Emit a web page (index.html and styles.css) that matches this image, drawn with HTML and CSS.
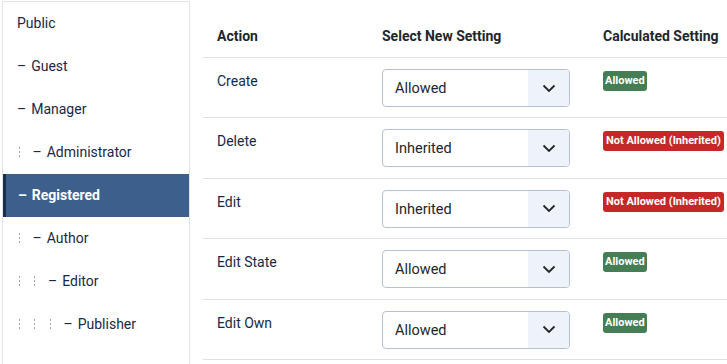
FILE: index.html
```html
<!DOCTYPE html>
<html>
<head>
  <title>Permissions</title>
  <link rel="stylesheet" href="styles.css">
</head>
<body>
  <div class="permissions">
    <ul class="groups">
      <li class="group">Public</li>
      <li class="group"><span class="dash">–</span>Guest</li>
      <li class="group"><span class="dash">–</span>Manager</li>
      <li class="group"><span class="indent"></span><span class="dash">–</span>Administrator</li>
      <li class="group active"><span class="dash">–</span>Registered</li>
      <li class="group"><span class="indent"></span><span class="dash">–</span>Author</li>
      <li class="group"><span class="indent"></span><span class="indent"></span><span class="dash">–</span>Editor</li>
      <li class="group"><span class="indent"></span><span class="indent"></span><span class="indent"></span><span class="dash">–</span>Publisher</li>
      <li class="group"></li>
    </ul>

    <table class="rules">
      <thead>
        <tr>
          <th class="col-action">Action</th>
          <th class="col-select">Select New Setting</th>
          <th class="col-calc">Calculated Setting</th>
        </tr>
      </thead>
      <tbody>
        <tr>
          <td class="action">Create</td>
          <td><div class="select"><span class="select-value">Allowed</span><span class="select-arrow"><svg width="14" height="9" viewBox="0 0 14 9"><path d="M1.5 1.5 L7 7 L12.5 1.5" fill="none" stroke="#22262a" stroke-width="1.8"/></svg></span></div></td>
          <td><span class="badge allowed">Allowed</span></td>
        </tr>
        <tr>
          <td class="action">Delete</td>
          <td><div class="select"><span class="select-value">Inherited</span><span class="select-arrow"><svg width="14" height="9" viewBox="0 0 14 9"><path d="M1.5 1.5 L7 7 L12.5 1.5" fill="none" stroke="#22262a" stroke-width="1.8"/></svg></span></div></td>
          <td><span class="badge denied">Not Allowed (Inherited)</span></td>
        </tr>
        <tr>
          <td class="action">Edit</td>
          <td><div class="select"><span class="select-value">Inherited</span><span class="select-arrow"><svg width="14" height="9" viewBox="0 0 14 9"><path d="M1.5 1.5 L7 7 L12.5 1.5" fill="none" stroke="#22262a" stroke-width="1.8"/></svg></span></div></td>
          <td><span class="badge denied">Not Allowed (Inherited)</span></td>
        </tr>
        <tr>
          <td class="action">Edit State</td>
          <td><div class="select"><span class="select-value">Allowed</span><span class="select-arrow"><svg width="14" height="9" viewBox="0 0 14 9"><path d="M1.5 1.5 L7 7 L12.5 1.5" fill="none" stroke="#22262a" stroke-width="1.8"/></svg></span></div></td>
          <td><span class="badge allowed">Allowed</span></td>
        </tr>
        <tr>
          <td class="action">Edit Own</td>
          <td><div class="select"><span class="select-value">Allowed</span><span class="select-arrow"><svg width="14" height="9" viewBox="0 0 14 9"><path d="M1.5 1.5 L7 7 L12.5 1.5" fill="none" stroke="#22262a" stroke-width="1.8"/></svg></span></div></td>
          <td><span class="badge allowed">Allowed</span></td>
        </tr>
      </tbody>
    </table>
  </div>
</body>
</html>
```

FILE: styles.css
```css
body {
  font-family: Roboto, "Noto Sans", sans-serif;
  font-size: 14px;
  color: #1a2845;
  margin: 0;
  background: #fff;
  overflow: hidden;
}

.permissions {
  display: flex;
  align-items: flex-start;
  gap: 13px;
  padding-left: 2px;
}

.groups {
  list-style: none;
  margin: 1px 0 0 0;
  padding: 0;
  width: 188px;
  box-sizing: border-box;
  flex: none;
  border: 1px solid #dfe3e8;
  border-bottom: none;
}

.group {
  display: flex;
  align-items: center;
  height: 43px;
  padding-left: 14px;
  padding-bottom: 1px;
  box-sizing: border-box;
  line-height: 1;
}

.group.active {
  background: #3d5f8c;
  border-left: 3px solid #1b2f4c;
  padding-left: 12px;
  color: #fff;
  font-weight: 700;
}

.dash {
  margin-right: 5px;
}

.indent {
  display: inline-block;
  width: 14px;
  height: 11px;
  margin-left: 1.5px;
  background: linear-gradient(#a9a19a 2px, transparent 2px) 0 0 / 1px 4px repeat-y;
}

.indent:last-of-type {
  margin-right: 1.5px;
}

.rules {
  flex: none;
  width: 560px;
  border-collapse: collapse;
}

.rules th {
  text-align: left;
  font-weight: 700;
  color: #22262a;
  padding: 26px 14px 10px;
  line-height: 21px;
  border-bottom: 1px solid #dee2e6;
  white-space: nowrap;
}

.col-action {
  width: 137px;
}

.col-select {
  width: 193px;
}

.rules td {
  vertical-align: top;
  padding: 11px 14px 10.4px;
  line-height: 21px;
  border-bottom: 1px solid #dee2e6;
}

.rules td.action {
  padding-top: 13px;
}

.select {
  display: flex;
  width: 188px;
  height: 38px;
  box-sizing: border-box;
  border: 1px solid #b4c0d4;
  border-radius: 4px;
  overflow: hidden;
  background: #fff;
}

.select-value {
  flex: 1;
  padding-left: 12px;
  line-height: 37px;
  font-size: 14.5px;
  color: #22262a;
}

.select-arrow {
  width: 41px;
  display: flex;
  align-items: center;
  justify-content: center;
  background: #eef2f9;
}

.badge {
  display: inline-block;
  margin-top: 2px;
  padding: 0 3px;
  height: 20px;
  line-height: 20px;
  font-size: 11px;
  font-weight: 700;
  color: #fff;
  border-radius: 3px;
  white-space: nowrap;
}

.badge.allowed {
  padding: 0 2px;
  background: #457d54;
}

.badge.denied {
  background: #c52827;
}
```
